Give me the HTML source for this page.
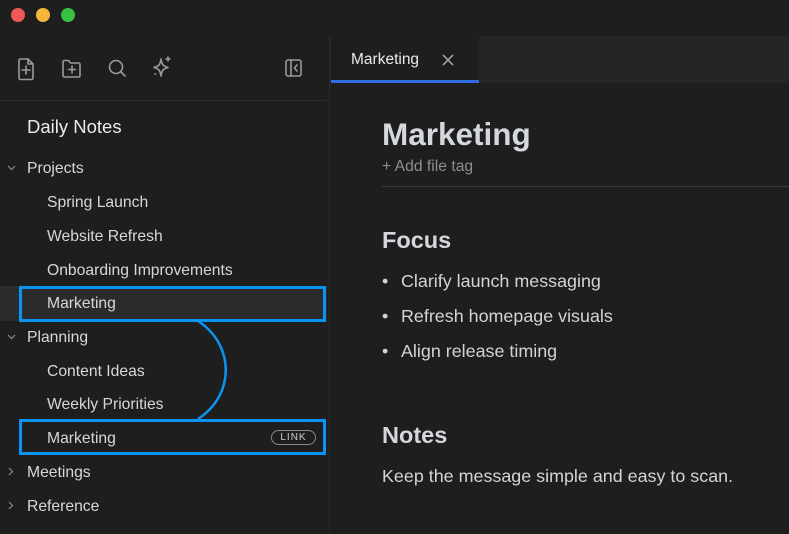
<!DOCTYPE html>
<html><head><style>
*{margin:0;padding:0;box-sizing:border-box}
body{width:789px;height:534px;background:#1e1e1e;font-family:"Liberation Sans",sans-serif;position:relative;overflow:hidden;color:#d6d6d6}
.a{position:absolute;white-space:nowrap}
.dot{position:absolute;top:8px;width:14px;height:14px;border-radius:50%}
.it{font-size:15.7px;color:#d8d8d8;line-height:20px}
.b{font-size:17.9px;color:#d4d4d4}
</style></head><body>
<div class="dot" style="left:11px;background:#ed5a55"></div>
<div class="dot" style="left:36px;background:#f4b73c"></div>
<div class="dot" style="left:61px;background:#36c142"></div>

<svg class="a" style="left:0;top:50px" width="330" height="40" fill="none" stroke="#9a9a9a" stroke-width="1.6" stroke-linecap="round" stroke-linejoin="round">
<path d="M20 9h8l5 5v14a1.5 1.5 0 0 1-1.5 1.5h-11a1.5 1.5 0 0 1-1.5-1.5V10.5A1.5 1.5 0 0 1 20 9z M28 9v5h5 M26 16v8 M22 20h8"/>
<path d="M63 12a1.5 1.5 0 0 1 1.5-1.5h4l2 2.5h8a1.5 1.5 0 0 1 1.5 1.5v11a1.5 1.5 0 0 1-1.5 1.5h-14a1.5 1.5 0 0 1-1.5-1.5z M72 16v7 M68.5 19.5h7"/>
<circle cx="116" cy="17" r="6.5"/><path d="M121 22l4 4"/>
<path d="M161 9c1 6 2 7 7 8.5c-5 1.5-6 2.5-7 8.5c-1-6-2-7-7-8.5c5-1.5 6-2.5 7-8.5z M168 7v4 M166 9h4 M155 24h.5"/>
<rect x="286" y="10" width="15" height="16" rx="2"/><path d="M291 10v16 M297 15l-2.5 3l2.5 3"/>
</svg>
<div class="a" style="left:0;top:100px;width:326px;height:1px;background:#2c2c2c"></div>
<div class="a" style="left:329px;top:36px;width:1px;height:498px;background:#2b2b2b"></div>

<div class="a" style="left:27px;top:116px;font-size:18.5px;color:#ececec">Daily Notes</div>

<div class="a" style="left:0;top:286px;width:327px;height:35px;background:#2b2b2b"></div>

<svg class="a" style="left:0;top:160px" width="20" height="360" fill="none" stroke="#8a8a8a" stroke-width="1.2">
<path d="M8 6l3.5 3.5L15 6"/><path d="M8 175l3.5 3.5L15 175"/>
<path d="M9 308l3.5 3.5L9 315"/><path d="M9 342l3.5 3.5L9 349"/>
</svg>
<div class="a it" style="left:27px;top:159px">Projects</div>
<div class="a it" style="left:47px;top:193px">Spring Launch</div>
<div class="a it" style="left:47px;top:227px">Website Refresh</div>
<div class="a it" style="left:47px;top:261px">Onboarding Improvements</div>
<div class="a it" style="left:47px;top:294px">Marketing</div>
<div class="a it" style="left:27px;top:328px">Planning</div>
<div class="a it" style="left:47px;top:362px">Content Ideas</div>
<div class="a it" style="left:47px;top:395px">Weekly Priorities</div>
<div class="a it" style="left:47px;top:429px">Marketing</div>
<div class="a it" style="left:27px;top:463px">Meetings</div>
<div class="a it" style="left:27px;top:497px">Reference</div>
<div class="a" style="left:271px;top:430px;width:45px;height:15px;border:1px solid #8a8a8a;border-radius:8px;font-size:10px;letter-spacing:1px;color:#cfcfcf;text-align:center;line-height:13px">LINK</div>

<svg class="a" style="left:0;top:0" width="330" height="534" fill="none" stroke="#0a94f2" stroke-width="3">
<rect x="20.5" y="287.5" width="304" height="33"/>
<rect x="20.5" y="420.5" width="304" height="33"/>
<path d="M198 321C235 345 235 395 198 419" stroke-width="2.5"/>
</svg>

<div class="a" style="left:330px;top:36px;width:459px;height:47px;background:#252525"></div>
<div class="a" style="left:331px;top:36px;width:148px;height:47px;background:#1e1e1e"></div>
<div class="a" style="left:331px;top:80px;width:148px;height:3px;background:#2f6fe0"></div>
<div class="a" style="left:351px;top:51px;font-size:15.5px;color:#eaeaea">Marketing</div>
<svg class="a" style="left:441px;top:53px" width="14" height="14" stroke="#aaa" stroke-width="1.5"><path d="M2 2l10 10M12 2L2 12"/></svg>

<div class="a" style="left:382px;top:116px;font-size:31.5px;font-weight:bold;color:#d4d7dc">Marketing</div>
<div class="a" style="left:382px;top:158px;font-size:15.7px;color:#8e8e8e">+ Add file tag</div>
<div class="a" style="left:382px;top:186px;width:407px;height:1px;background:#3a3a3a"></div>
<div class="a" style="left:382px;top:227px;font-size:23.5px;font-weight:bold;color:#d4d7dc">Focus</div>
<div class="a b" style="left:382px;top:271px">•</div><div class="a b" style="left:401px;top:271px">Clarify launch messaging</div>
<div class="a b" style="left:382px;top:306px">•</div><div class="a b" style="left:401px;top:306px">Refresh homepage visuals</div>
<div class="a b" style="left:382px;top:341px">•</div><div class="a b" style="left:401px;top:341px">Align release timing</div>
<div class="a" style="left:382px;top:422px;font-size:23.5px;font-weight:bold;color:#d4d7dc">Notes</div>
<div class="a b" style="left:382px;top:466px">Keep the message simple and easy to scan.</div>
</body></html>
